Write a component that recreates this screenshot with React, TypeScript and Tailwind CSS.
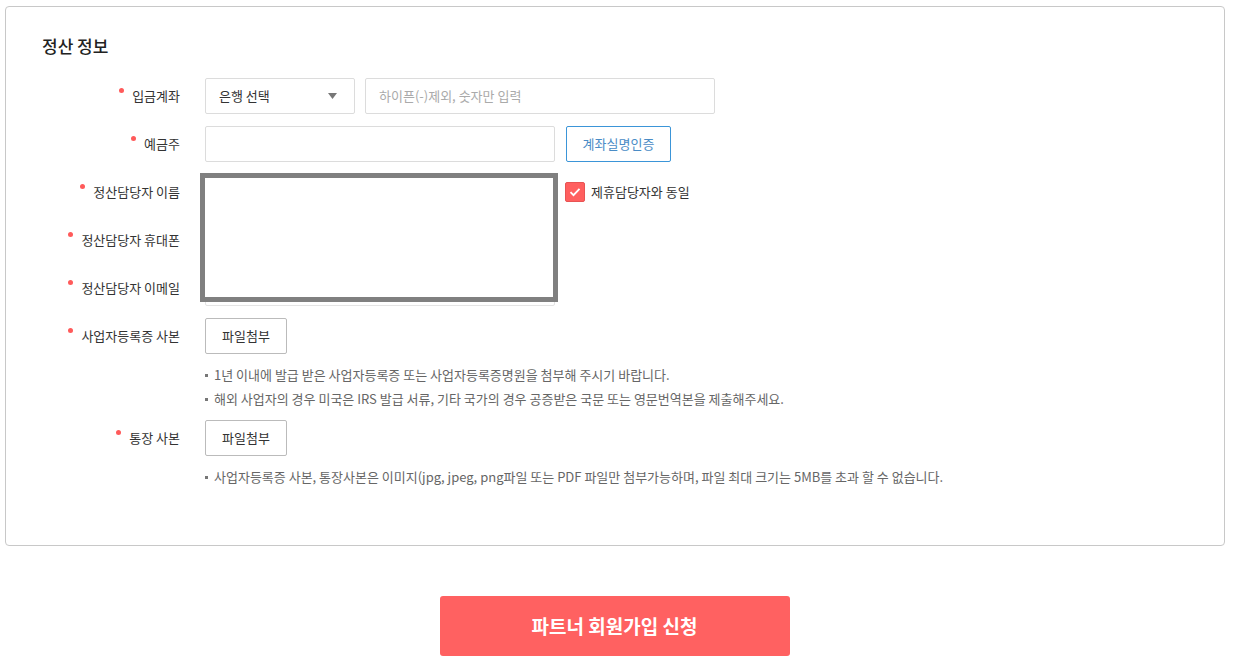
import { Fragment } from 'react';

const Dot = () => <span className="mb-[12px] mr-[8px] inline-block h-[5px] w-[5px] rounded-full bg-[#ff5a5a]" />;

const Label = ({ text }: { text: string }) => (
  <div className="flex w-[138px] shrink-0 items-center justify-end text-[13px] leading-[16px] text-[#333]">
    <Dot />
    <span>{text}</span>
  </div>
);

const Note = ({ children }: { children: React.ReactNode }) => (
  <p className="flex items-center text-[13px] leading-[24px] text-[#666]">
    <span className="mr-[6px] inline-block h-[3px] w-[3px] bg-[#777]" />
    {children}
  </p>
);

const inputCls = 'h-[36px] border border-[#dcdcdc] bg-white rounded-[2px]';

const App = () => {
  return (
    <div className="min-h-screen bg-white font-['Noto_Sans_CJK_KR',sans-serif]">
      <div className="pl-[5px] pr-[20px] pt-[6px]">
        <div className="rounded-[4px] border border-[#c8c8c8] pb-[56px] pl-[36px] pt-[28px]">
          <h2 className="text-[17px] font-medium leading-[22px] text-[#222]">정산 정보</h2>

          {/* 입금계좌 */}
          <div className="mt-[21px] flex h-[36px] items-center">
            <Label text="입금계좌" />
            <div className="ml-[25px] flex gap-[10px]">
              <div className={`${inputCls} flex w-[150px] items-center justify-between pl-[13px] pr-[17px]`}>
                <span className="text-[13px] text-[#333]">은행 선택</span>
                <svg width="9" height="6" viewBox="0 0 9 6">
                  <path d="M0 0h9L4.5 6z" fill="#777" />
                </svg>
              </div>
              <div className={`${inputCls} flex w-[350px] items-center pl-[13px]`}>
                <span className="text-[13px] text-[#aaa]">하이픈(-)제외, 숫자만 입력</span>
              </div>
            </div>
          </div>

          {/* 예금주 */}
          <div className="mt-[12px] flex h-[36px] items-center">
            <Label text="예금주" />
            <div className="ml-[25px] flex gap-[11px]">
              <div className={`${inputCls} w-[350px]`} />
              <button className="h-[36px] w-[105px] rounded-[2px] border border-[#3b95d8] text-[13px] text-[#4a8cc6]">
                계좌실명인증
              </button>
            </div>
          </div>

          {/* 정산담당자 */}
          <div className="mt-[12px] flex">
            <div className="flex flex-col gap-[12px]">
              {['정산담당자 이름', '정산담당자 휴대폰', '정산담당자 이메일'].map((t) => (
                <div key={t} className="flex h-[36px] items-center">
                  <Label text={t} />
                </div>
              ))}
            </div>
            <div className="relative ml-[25px] flex flex-col gap-[12px]">
              <div className={`${inputCls} w-[350px]`} />
              <div className={`${inputCls} w-[350px]`} />
              <div className={`${inputCls} w-[350px] border-[#e4e4e4]`} />
              <div className="absolute left-[-5px] top-[-1px] h-[129px] w-[358px] border-[5px] border-[#808080] bg-white" />
            </div>
            <div className="ml-[10px] flex h-[36px] items-center gap-[6px]">
              <span className="flex h-[20px] w-[20px] items-center justify-center rounded-[2px] border border-[#e85454] bg-[#ff5f5f]">
                <svg width="12" height="10" viewBox="0 0 12 10">
                  <path d="M1.5 5.2l3 3L10.5 1.8" fill="none" stroke="#fff" strokeWidth="1.8" />
                </svg>
              </span>
              <span className="text-[13px] text-[#333]">제휴담당자와 동일</span>
            </div>
          </div>

          {/* 사업자등록증 사본 */}
          <div className="mt-[12px] flex h-[36px] items-center">
            <Label text="사업자등록증 사본" />
            <button className="ml-[25px] h-[36px] w-[82px] rounded-[2px] border border-[#bbb] bg-white text-[13px] text-[#333]">
              파일첨부
            </button>
          </div>
          <div className="ml-[163px] mt-[9px]">
            <Note>1년 이내에 발급 받은 사업자등록증 또는 사업자등록증명원을 첨부해 주시기 바랍니다.</Note>
            <Note>해외 사업자의 경우 미국은 IRS 발급 서류, 기타 국가의 경우 공증받은 국문 또는 영문번역본을 제출해주세요.</Note>
          </div>

          {/* 통장 사본 */}
          <div className="mt-[9px] flex h-[36px] items-center">
            <Label text="통장 사본" />
            <button className="ml-[25px] h-[36px] w-[82px] rounded-[2px] border border-[#bbb] bg-white text-[13px] text-[#333]">
              파일첨부
            </button>
          </div>
          <div className="ml-[163px] mt-[9px]">
            <Note>사업자등록증 사본, 통장사본은 이미지(jpg, jpeg, png파일 또는 PDF 파일만 첨부가능하며, 파일 최대 크기는 5MB를 초과 할 수 없습니다.</Note>
          </div>
        </div>
      </div>

      <div className="mt-[50px] flex justify-center">
        <button className="ml-[-16px] h-[60px] w-[350px] rounded-[3px] bg-[#ff6161] text-[19px] font-bold text-white">
          파트너 회원가입 신청
        </button>
      </div>

      {/* footer (cut off) */}
      <div className="mt-[7px] flex items-start text-[12px] leading-[16px]">
        <span className="ml-[65px] mt-[4px] inline-block h-[5px] w-[5px] rounded-full bg-[#ff5a5a]" />
        <span className="ml-[10px] text-[#555]">개인정보 수집 및 이용 동의</span>
        <span className="ml-[22px] mt-[4px] inline-block h-[5px] w-[5px] bg-[#888]" />
        <Fragment />
        <span className="ml-[338px] mt-[4px] inline-block h-[5px] w-[5px] bg-[#888]" />
        <span className="ml-[15px] text-[#4a8cd6]">개인정보 처리방침 전문보기</span>
      </div>
    </div>
  );
};

export default App;
